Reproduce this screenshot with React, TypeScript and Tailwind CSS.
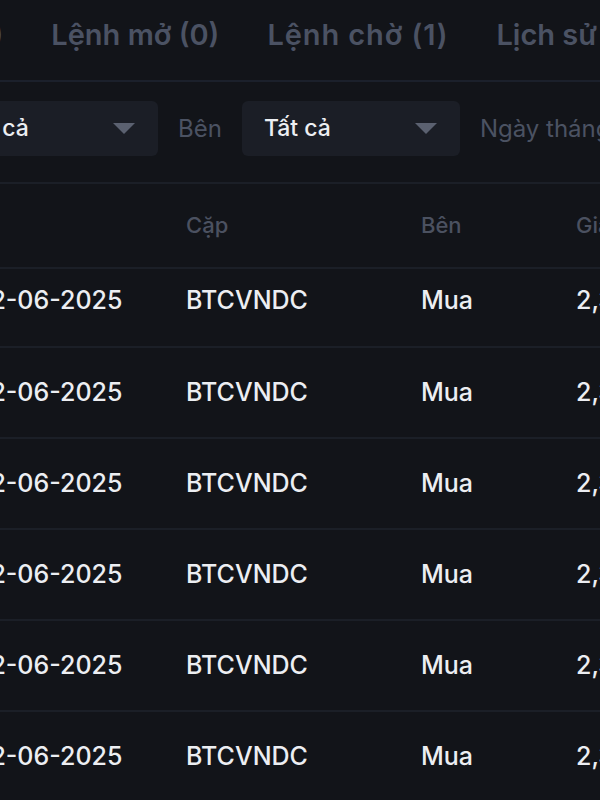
import React from "react";

const Caret = () => (
  <svg width="22" height="11" viewBox="0 0 22 11" className="shrink-0">
    <path d="M0 0 L22 0 L11 11 Z" fill="#5b6170" />
  </svg>
);

const Select = ({ value }: { value: string }) => (
  <div className="flex h-[55px] w-[218px] shrink-0 items-center justify-between rounded-[6px] bg-[#1b1e26] pl-[22px] pr-[23px]">
    <span className="text-[23px] font-medium text-[#eceef2]">{value}</span>
    <Caret />
  </div>
);

const rows = Array.from({ length: 6 });

export default function App() {
  return (
    <div
      className="h-[800px] w-[600px] overflow-hidden bg-[#121419]"
      style={{ fontFamily: "Inter, 'Noto Sans', sans-serif" }}
    >
      <div className="w-[900px]">
        {/* Tabs */}
        <div className="flex h-[82px] items-start border-b-2 border-[#1b202b]">
          <div className="-ml-[126px] flex gap-[48px] pt-[13px] text-[29px] font-semibold text-[#4b5263] whitespace-nowrap">
            <span>Vị thế (0)</span>
            <span>Lệnh mở (0)</span>
            <span className="tracking-[0.9px]">Lệnh chờ (1)</span>
            <span>Lịch sử lệnh</span>
          </div>
        </div>
        {/* Filters */}
        <div className="flex h-[102px] items-start border-b-2 border-[#1b1f27] pt-[19px]">
          <div className="-ml-[60px] flex items-center gap-[20px] whitespace-nowrap">
            <Select value="Tất cả" />
            <span className="text-[24px] text-[#4b5262]">Bên</span>
            <Select value="Tất cả" />
            <span className="text-[24px] text-[#4b5262]">Ngày tháng</span>
          </div>
        </div>
        {/* Header */}
        <div className="flex h-[85px] items-center border-b-2 border-[#1b1f27] text-[22px] font-medium text-[#4b5160] whitespace-nowrap">
          <div className="-ml-[200px] w-[386px]">Ngày</div>
          <div className="w-[235px]">Cặp</div>
          <div className="w-[155px]">Bên</div>
          <div>Giá</div>
        </div>
        {rows.map((_, i) => (
          <div
            key={i}
            className={`flex items-center border-b-2 border-[#1b1f27] text-[25px] font-medium text-[#eceef2] whitespace-nowrap ${
              i === 0 ? "h-[79px] pb-[13px]" : "h-[91px]"
            }`}
          >
            <div className="-ml-[200px] w-[386px] pl-[180px]">12-06-2025</div>
            <div className="w-[235px]">BTCVNDC</div>
            <div className="w-[155px]">Mua</div>
            <div>2,345,000,000</div>
          </div>
        ))}
      </div>
    </div>
  );
}
